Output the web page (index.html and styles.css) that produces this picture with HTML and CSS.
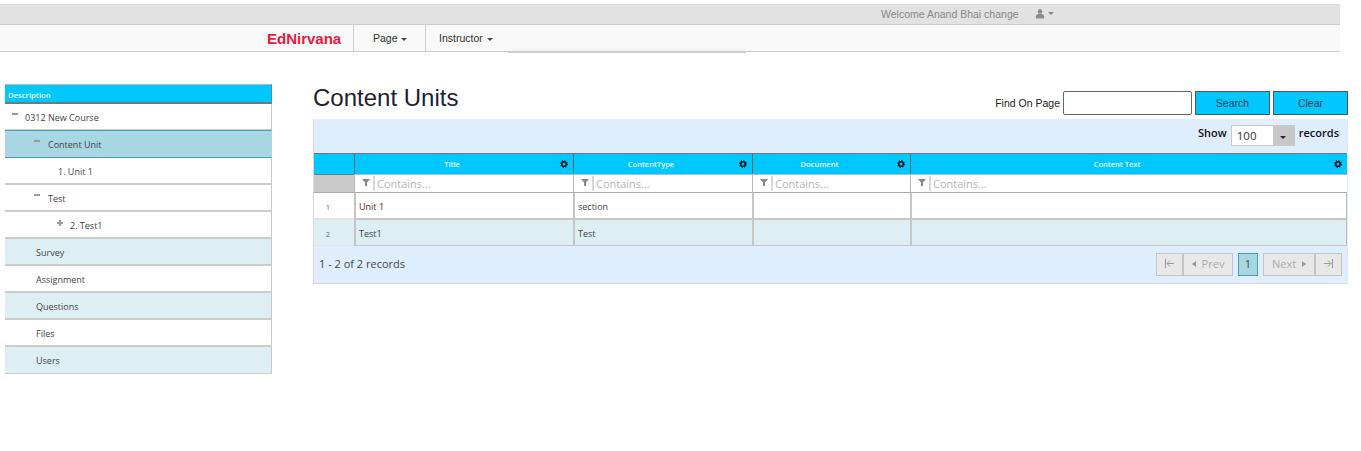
FILE: index.html
```html
<!DOCTYPE html>
<html lang="en">
<head>
<meta charset="utf-8">
<title>Content Units</title>
<link rel="stylesheet" href="styles.css">
</head>
<body>
<svg class="defs" width="0" height="0"><defs><g id="gear"><circle cx="4.500" cy="4.500" r="2.600" fill="none" stroke="#06161c" stroke-width="1.800"/><circle cx="4.500" cy="4.500" r="3.700" fill="none" stroke="#06161c" stroke-width="1.300" stroke-dasharray="1.500 1.400"/></g></defs></svg>
<header class="header">
  <div class="topbar">
    <span class="welcome">Welcome Anand Bhai change</span>
    <svg class="user-icon" width="10" height="10" viewBox="0 0 11 11"><circle cx="5.500" cy="2.800" r="2.500"/><path d="M1 10.500V8q0-2.300 2.500-2.500h4Q10 5.700 10 8v2.500z"/></svg>
    <span class="caret caret-grey"></span>
  </div>
  <nav class="navbar">
    <span class="brand">EdNirvana</span>
    <span class="nav-item nav-page">Page <span class="caret"></span></span>
    <span class="nav-item nav-instructor">Instructor <span class="caret"></span></span>
  </nav>
</header>
<div class="layout">
  <aside class="sidebar">
    <div class="side-head">Description</div>
    <div class="tree-row"><span class="tree-l0"><span class="minus"></span>0312 New Course</span></div>
    <div class="tree-row selected"><span class="tree-l1"><span class="minus"></span>Content Unit</span></div>
    <div class="tree-row"><span class="tree-l2">1. Unit 1</span></div>
    <div class="tree-row"><span class="tree-l1"><span class="minus"></span>Test</span></div>
    <div class="tree-row"><span class="tree-l3"><span class="plus"></span>2. Test1</span></div>
    <div class="tree-row alt"><span class="tree-leaf">Survey</span></div>
    <div class="tree-row"><span class="tree-leaf">Assignment</span></div>
    <div class="tree-row alt"><span class="tree-leaf">Questions</span></div>
    <div class="tree-row"><span class="tree-leaf">Files</span></div>
    <div class="tree-row alt"><span class="tree-leaf">Users</span></div>
  </aside>
  <main class="main">
    <div class="title-row">
      <h1 class="title">Content Units</h1>
      <form class="find">
        <label class="find-label">Find On Page</label>
        <input class="find-input" type="text">
        <button class="btn" type="button">Search</button>
        <button class="btn" type="button">Clear</button>
      </form>
    </div>
    <section class="panel">
      <div class="toolbar">
        <b>Show</b>
        <span class="select"><span class="select-val">100</span><span class="select-arrow"><span class="caret caret-dark"></span></span></span>
        <b>records</b>
      </div>
      <div class="grid">
        <div class="hcell hnum"></div>
        <div class="hcell">Title<svg class="gear" width="8" height="8" viewBox="0 0 9 9"><use href="#gear"/></svg></div>
        <div class="hcell">ContentType<svg class="gear" width="8" height="8" viewBox="0 0 9 9"><use href="#gear"/></svg></div>
        <div class="hcell">Document<svg class="gear" width="8" height="8" viewBox="0 0 9 9"><use href="#gear"/></svg></div>
        <div class="hcell">Content Text<svg class="gear" width="8" height="8" viewBox="0 0 9 9"><use href="#gear"/></svg></div>

        <div class="fcell fnum"></div>
        <div class="fcell"><svg class="funnel" width="8" height="7" viewBox="0 0 8 7"><path d="M0 0h8L5 3.500V7H3V3.500z"/></svg><span class="ph">Contains...</span></div>
        <div class="fcell"><svg class="funnel" width="8" height="7" viewBox="0 0 8 7"><path d="M0 0h8L5 3.500V7H3V3.500z"/></svg><span class="ph">Contains...</span></div>
        <div class="fcell"><svg class="funnel" width="8" height="7" viewBox="0 0 8 7"><path d="M0 0h8L5 3.500V7H3V3.500z"/></svg><span class="ph">Contains...</span></div>
        <div class="fcell"><svg class="funnel" width="8" height="7" viewBox="0 0 8 7"><path d="M0 0h8L5 3.500V7H3V3.500z"/></svg><span class="ph">Contains...</span></div>

        <div class="cell num">1</div>
        <div class="cell title-cell">Unit 1</div>
        <div class="cell">section</div>
        <div class="cell"></div>
        <div class="cell"></div>

        <div class="cell num alt">2</div>
        <div class="cell alt">Test1</div>
        <div class="cell alt">Test</div>
        <div class="cell alt"></div>
        <div class="cell alt"></div>
      </div>
      <div class="footer">
        <span class="count">1 - 2 of 2 records</span>
        <div class="pager">
          <span class="pg-group">
            <span class="pg pg-icon"><svg width="11" height="9" viewBox="0 0 11 9"><path d="M1.500 0v9M10 4.500H3M6 1.500l-3 3 3 3" fill="none" stroke="#999"/></svg></span>
            <span class="pg pg-prev"><span class="tri-left"></span>Prev</span>
          </span>
          <span class="pg pg-current">1</span>
          <span class="pg-group">
            <span class="pg pg-next">Next<span class="tri-right"></span></span>
            <span class="pg pg-icon"><svg width="11" height="9" viewBox="0 0 11 9"><path d="M9.500 0v9M1 4.500h7M5 1.500l3 3-3 3" fill="none" stroke="#999"/></svg></span>
          </span>
        </div>
      </div>
    </section>
  </main>
</div>
</body>
</html>
```
FILE: styles.css
```css
* { box-sizing: border-box; }
html, body { margin: 0; padding: 0; }
body { background: #fff; font-family: "Liberation Sans", Arial, sans-serif; width: 1361px; height: 451px; overflow: hidden; padding-top: 4px; color: #222; }
.defs { position: absolute; }

.header { width: 1340px; }
.topbar { height: 21px; background: #e2e2e2; border-top: 1px solid #dcdcdc; border-bottom: 1px solid #ccc; display: flex; align-items: center; padding: 0 0 2px 881px; font-size: 10.500px; color: #888; }
.welcome { margin-right: 16px; }
.user-icon { fill: #8a8a8a; margin-right: 2px; }
.caret { display: inline-block; width: 0; height: 0; border-left: 3px solid transparent; border-right: 3px solid transparent; border-top: 3px solid #444; vertical-align: middle; margin-left: 1px; }
.caret-grey { border-top-color: #888; }
.navbar { position: relative; height: 27px; background: #f8f8f8; border-bottom: 1px solid #ccc; display: flex; align-items: stretch; padding-left: 267px; }
.navbar::after { content: ""; position: absolute; left: 508px; width: 238px; bottom: -2px; height: 2px; border-top: 1px solid #f4f4f4; border-bottom: 1px solid #ccc; }
.brand { color: #e8193f; font-weight: bold; font-size: 15px; line-height: 27px; width: 86px; }
.nav-item { font-size: 10.500px; line-height: 27px; border-left: 1px solid #ccc; color: #333; padding-left: 19px; }
.nav-page { width: 72px; }
.nav-instructor { width: 83px; padding-left: 13px; }

.layout { display: flex; align-items: flex-start; padding: 32px 0 0 5px; }
.sidebar { width: 267px; margin-right: 41px; font-family: "Open Sans", sans-serif; font-size: 9px; color: #444; }
.side-head { height: 20px; background: #00c8ff; color: #eaf9ff; font-size: 7.700px; font-weight: 600; line-height: 20px; padding-left: 3px; border-top: 1px solid #bbb; border-bottom: 2px solid #777; border-right: 1px solid #2a9ec0; }
.tree-row { height: 27px; padding-top: 1px; border-right: 1px solid #c8c8c8; border-bottom: 2px solid #ccc; background: #fff; display: flex; align-items: center; }
.tree-row.selected { background: #a8d6e2; border-top: 1px solid #4a9fb5; border-bottom: 1px solid #4a9fb5; border-right-color: #a8d6e2; margin-top: -1px; height: 28px; padding-top: 0; }
.tree-row.alt { background: #deeff4; }
.tree-row:last-child { border-bottom-width: 1px; padding-top: 0; }
.tree-l0 { padding-left: 20px; position: relative; }
.tree-l1 { padding-left: 43px; position: relative; }
.tree-l2 { padding-left: 53px; }
.tree-l3 { padding-left: 65px; position: relative; }
.tree-leaf { padding-left: 31px; }
.minus { position: absolute; width: 6px; height: 2px; background: #999; margin-left: -13px; top: 2px; }
.tree-l1 .minus { margin-left: -14px; }
.plus { position: absolute; width: 6px; height: 6px; margin-left: -13px; top: 1px; background: linear-gradient(#999,#999) center/6px 2px no-repeat, linear-gradient(#999,#999) center/2px 6px no-repeat; }

.main { width: 1035px; }
.title-row { display: flex; justify-content: space-between; height: 35px; }
.title { margin: 0; font-weight: normal; font-size: 24px; line-height: 28px; color: #1d2230; }
.find { display: flex; align-items: flex-start; padding-top: 7px; margin: 0; }
.find-label { font-size: 10.500px; line-height: 24px; color: #222; margin-right: 3px; }
.find-input { width: 129px; height: 24px; border: 1px solid #666; border-radius: 2px; background: #fff; margin: 0 3px 0 0; padding: 0; }
.btn { width: 75px; height: 24px; background: #00c8ff; border: 1px solid #555; padding: 0; font: 10.500px "Liberation Sans", sans-serif; color: #1b3a4a; margin-right: 3px; }
.btn:last-child { margin-right: 0; }

.panel { background: #deeeff; border-left: 1px solid #d8d8d8; border-bottom: 1px solid #d8d8d8; height: 165px; font-family: "Open Sans", sans-serif; }
.toolbar { height: 34px; display: flex; justify-content: flex-end; align-items: flex-start; padding: 6px 9px 0 0; font-size: 11px; color: #111; line-height: 16px; gap: 4px; }
.toolbar b { font-weight: 600; }
.select { width: 64px; height: 21px; background: #fff; border: 1px solid #c8c8c8; display: flex; }
.select-val { flex: 1; font-size: 11.500px; line-height: 19px; padding-left: 5px; color: #333; }
.select-arrow { width: 21px; background: #c8c8c8; display: flex; align-items: center; justify-content: center; }
.caret-dark { border-top-color: #222; margin: 3px 0 0; }

.grid { display: grid; grid-template-columns: 40px 219px 179px 158px 437px; grid-template-rows: 21px 19px 27px 26px; width: 1033px; }
.hcell { position: relative; background: #00c8ff; border-top: 1px solid #777; border-left: 1px solid #666; color: #eafaff; font-size: 7.500px; font-weight: 600; text-align: center; line-height: 20px; padding-right: 24px; }
.hnum { border-left: 0; padding: 0; }
.hcell:last-child { border-right: 1px solid #666; }
.gear { position: absolute; right: 5px; top: 6px; }
.fcell { background: #fff; border-top: 1px solid #bbb; border-bottom: 1px solid #aaa; border-left: 1px solid #bbb; display: flex; align-items: center; padding-left: 7px; font-size: 11px; color: #b5b5b5; }
.fcell:last-child { border-right: 1px solid #aaa; }
.fnum { background: #c9c9c9; border-left: 0; border-top: 1px solid #777; }
.funnel { fill: #888; margin: -3px 3px 0 0; flex: none; }
.ph { border-left: 2px solid #d8d8d8; padding-left: 2px; line-height: 15px; }
.cell { background: #fff; border-left: 2px solid #c6c6c6; border-bottom: 2px solid #c6c6c6; font-size: 9px; line-height: 26px; padding: 1px 0 0 3px; color: #3f3f3f; }
.cell:nth-child(5n) { border-right: 1px solid #bbb; }
.cell.num { border-left: 0; padding: 1px 12px 0 0; text-align: center; font-size: 7.500px; color: #666; border-bottom-color: #e4e4e4; }
.title-cell { color: #5a2a20; }
.cell.alt { background: #deeff3; border-bottom-width: 1px; }
.footer { height: 37px; display: flex; justify-content: space-between; align-items: center; padding: 0 6px 1px 5px; }
.count { font-size: 11px; color: #444; margin-bottom: 2px; }
.pager { display: flex; gap: 5px; }
.pg-group { display: flex; }
.pg { height: 23px; padding-bottom: 1px; display: flex; align-items: center; justify-content: center; border: 1px solid #c4c4c4; background: #e8e8e8; font-size: 11px; color: #aaa; }
.pg-icon { width: 27px; }
.pg-prev { width: 50px; }
.pg-next { width: 52px; }
.pg-current { width: 20px; background: #a8d6e2; border-color: #4a9fb5; color: #444; }
.tri-left { width: 0; height: 0; border-top: 3px solid transparent; border-bottom: 3px solid transparent; border-right: 4px solid #999; margin-right: 6px; }
.tri-right { width: 0; height: 0; border-top: 3px solid transparent; border-bottom: 3px solid transparent; border-left: 4px solid #999; margin-left: 6px; }
```
